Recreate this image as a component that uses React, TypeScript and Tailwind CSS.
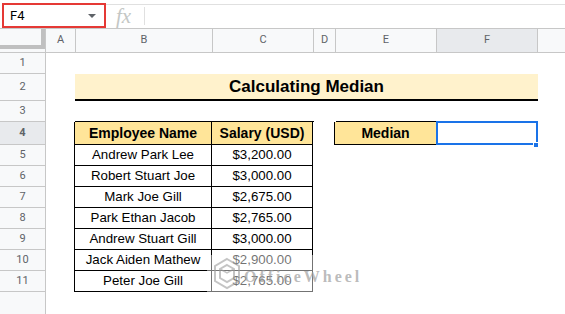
const cols = [
  { key: "A", w: "w-[30px]" },
  { key: "B", w: "w-[137px]" },
  { key: "C", w: "w-[101px]" },
  { key: "D", w: "w-[22px]" },
  { key: "E", w: "w-[101px]" },
  { key: "F", w: "w-[101px]" },
];

const employees = [
  ["Andrew Park Lee", "$3,200.00"],
  ["Robert Stuart Joe", "$3,000.00"],
  ["Mark Joe Gill", "$2,675.00"],
  ["Park Ethan Jacob", "$2,765.00"],
  ["Andrew Stuart Gill", "$3,000.00"],
  ["Jack Aiden Mathew", "$2,900.00"],
  ["Peter Joe Gill", "$2,765.00"],
];

function RowHead({ n, active, h }: { n: number | string; active?: boolean; h: string }) {
  return (
    <div
      className={`${h} w-[46px] shrink-0 flex items-center justify-center border-r border-b border-[#c7c7c7] text-[11px] text-[#5f6368] font-['Roboto',sans-serif] ${
        active ? "bg-[#e8eaed]" : "bg-[#f8f9fa]"
      }`}
    >
      {n}
    </div>
  );
}

function FormulaBar() {
  return (
    <div className="flex h-[28px]">
      <div className="pl-[2px] pt-[3px]">
        <div className="w-[104px] h-[25px] border-2 border-[#e53935] flex items-center justify-between pl-[6px] pr-[8px]">
          <span className="text-[13px] text-black font-['Roboto',sans-serif]">F4</span>
          <span className="w-0 h-0 border-l-[4px] border-r-[4px] border-t-[4px] border-l-transparent border-r-transparent border-t-[#5f6368]" />
        </div>
      </div>
      <div className="flex-1 mt-[4px] border-t border-[#e0e0e0] flex items-start">
        <span className="ml-[10px] text-[21px] leading-[22px] italic text-[#c4c7c5] font-['Liberation_Serif',serif]">fx</span>
        <span className="ml-[13px] mt-[2px] w-px h-[18px] bg-[#e0e0e0]" />
      </div>
    </div>
  );
}

function ColumnHeader() {
  return (
    <div className="flex h-[25px] border-t border-b border-[#c7c7c7] bg-[#f8f9fa] text-[11px] text-[#5f6368] font-['Roboto',sans-serif]">
      <div className="w-[46px] shrink-0 flex">
        <div className="w-[45px] h-[20px] border-r-4 border-b-4 border-[#c0c0c0] bg-[#f8f9fa]" />
        <div className="w-px bg-[#c7c7c7]" />
      </div>
      {cols.map((c) => (
        <div
          key={c.key}
          className={`${c.w} shrink-0 flex items-center justify-center border-r border-[#c7c7c7] ${
            c.key === "F" ? "bg-[#e8eaed]" : ""
          }`}
        >
          {c.key}
        </div>
      ))}
      <div className="flex-1" />
    </div>
  );
}

export default function App() {
  return (
    <div className="relative w-[565px] h-[314px] overflow-hidden bg-white font-['Liberation_Sans',Arial,sans-serif] text-black">
      <FormulaBar />
      <ColumnHeader />

      {/* row 1 */}
      <div className="flex">
        <RowHead n={1} h="h-[21px]" />
      </div>

      {/* row 2 - title */}
      <div className="flex">
        <RowHead n={2} h="h-[27px]" />
        <div className="w-[29px] shrink-0" />
        <div className="w-[463px] h-[27px] shrink-0 bg-[#fff2cc] border-b-2 border-black flex items-center justify-center text-[17px] font-bold">
          Calculating Median
        </div>
      </div>

      {/* row 3 */}
      <div className="flex">
        <RowHead n={3} h="h-[21px]" />
        <div className="w-[29px] shrink-0" />
        <div className="w-[239px] h-[21px] shrink-0 border-b border-black" />
        <div className="w-[22px] shrink-0" />
        <div className="w-[102px] h-[21px] shrink-0 border-b border-black" />
      </div>

      {/* row 4 - headers */}
      <div className="flex text-[14px] font-bold">
        <RowHead n={4} h="h-[23px]" active />
        <div className="w-[29px] shrink-0 border-r border-black" />
        <div className="w-[137px] h-[23px] shrink-0 bg-[#ffe599] border-r border-b border-black flex items-center justify-center">
          Employee Name
        </div>
        <div className="w-[101px] h-[23px] shrink-0 bg-[#ffe599] border-r border-b border-black flex items-center justify-center">
          Salary (USD)
        </div>
        <div className="w-[22px] shrink-0 border-r border-black" />
        <div className="w-[101px] h-[23px] shrink-0 bg-[#ffe599] border-b border-black flex items-center justify-center">
          Median
        </div>
        <div className="relative w-[102px] h-[23px] shrink-0">
          <div className="absolute -top-px left-0 w-[102px] h-[24px] border-2 border-[#1a73e8]" />
          <div className="absolute -bottom-[3px] -right-[1px] w-[6px] h-[6px] bg-[#1a73e8] border border-white" />
        </div>
      </div>

      {/* rows 5-11 */}
      {employees.map(([name, salary], i) => (
        <div key={name} className="flex text-[13.3px]">
          <RowHead n={i + 5} h="h-[21px]" />
          <div className="w-[29px] shrink-0 border-r border-black" />
          <div className="w-[137px] h-[21px] shrink-0 border-r border-b border-black flex items-center justify-center">
            {name}
          </div>
          <div className="w-[101px] h-[21px] shrink-0 border-r border-b border-black flex items-center justify-center">
            {salary}
          </div>
        </div>
      ))}

      {/* row 12 */}
      <div className="flex">
        <RowHead n="" h="h-[30px]" />
      </div>

      {/* watermark */}
      <div className="absolute left-[207px] top-[255px] w-[170px] h-[38px] bg-white/45 flex items-center">
        <svg width="30" height="34" viewBox="0 0 30 34" className="ml-[5px] opacity-60">
          <path d="M15 2 L27 9 L27 24 L15 31 L3 24 L3 9 Z" fill="none" stroke="#9e9e9e" strokeWidth="2" />
          <path d="M15 8 L22 12 L22 21 L15 25 L8 21 L8 12 Z" fill="none" stroke="#9e9e9e" strokeWidth="2" />
          <path d="M8 12 L15 16 L22 12" fill="none" stroke="#9e9e9e" strokeWidth="1.5" />
        </svg>
        <span className="ml-[2px] mt-[6px] text-[16px] tracking-[3px] font-bold text-[#9e9e9e]/70 font-['Liberation_Serif',serif]">
          OfficeWheel
        </span>
      </div>
    </div>
  );
}
